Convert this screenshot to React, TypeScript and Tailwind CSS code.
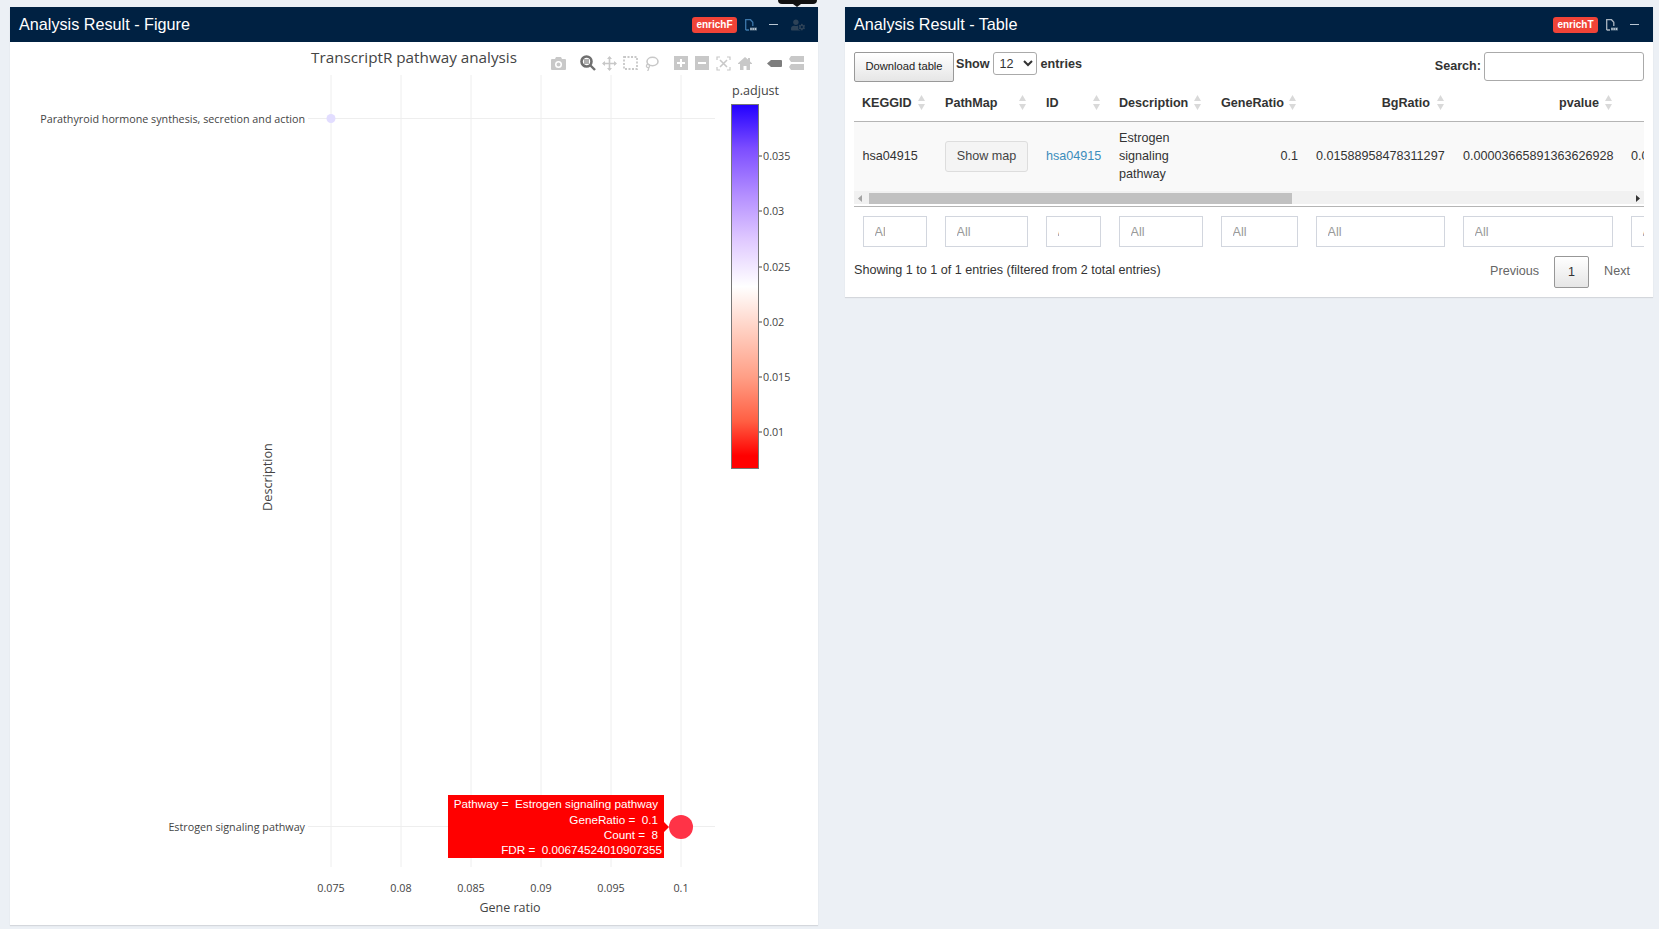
import { FaUserCog } from 'react-icons/fa';

const tickFont = { fontFamily: '"Open Sans", sans-serif' };

const xTicks = [
  { x: 331, label: '0.075' },
  { x: 401, label: '0.08' },
  { x: 471, label: '0.085' },
  { x: 541, label: '0.09' },
  { x: 611, label: '0.095' },
  { x: 681, label: '0.1' },
];

const colorTicks = [
  { y: 156, label: '0.035' },
  { y: 211, label: '0.03' },
  { y: 267, label: '0.025' },
  { y: 322, label: '0.02' },
  { y: 377, label: '0.015' },
  { y: 432, label: '0.01' },
];

function Chart() {
  return (
    <svg width="808" height="883" viewBox="10 42 808 883" className="block" style={tickFont}>
      <defs>
        <linearGradient id="padjust" x1="0" y1="1" x2="0" y2="0">
          <stop offset="0" stopColor="#ff0000" />
          <stop offset="0.035" stopColor="#ff0000" />
          <stop offset="0.13" stopColor="#ff5f43" />
          <stop offset="0.25" stopColor="#ff9e85" />
          <stop offset="0.38" stopColor="#ffd0c2" />
          <stop offset="0.5" stopColor="#ffffff" />
          <stop offset="0.63" stopColor="#dfc8ff" />
          <stop offset="0.75" stopColor="#b48fff" />
          <stop offset="0.88" stopColor="#7c4dff" />
          <stop offset="1" stopColor="#2200ff" />
        </linearGradient>
      </defs>

      <text x="414" y="63" textAnchor="middle" fontSize="15.25" fill="#444">
        TranscriptR pathway analysis
      </text>

      {xTicks.map(t => (
        <g key={t.label}>
          <line x1={t.x} x2={t.x} y1="75" y2="867" stroke="#eeeeee" />
          <text x={t.x} y="892" textAnchor="middle" fontSize="10.75" fill="#444">
            {t.label}
          </text>
        </g>
      ))}
      <line x1="308" x2="715" y1="118.5" y2="118.5" stroke="#eeeeee" />
      <line x1="308" x2="715" y1="826.5" y2="826.5" stroke="#eeeeee" />

      <text x="305" y="123" textAnchor="end" fontSize="10.75" fill="#444">
        Parathyroid hormone synthesis, secretion and action
      </text>
      <text x="305" y="831" textAnchor="end" fontSize="10.75" fill="#444">
        Estrogen signaling pathway
      </text>
      <text x="510" y="912" textAnchor="middle" fontSize="12.5" fill="#444">
        Gene ratio
      </text>
      <text transform="translate(272 477) rotate(-90)" textAnchor="middle" fontSize="12.7" fill="#444">
        Description
      </text>

      <circle cx="331" cy="118.5" r="4.5" fill="#e2ddff" />
      <circle cx="681" cy="827" r="12" fill="#ff3347" />

      <text x="732" y="95" fontSize="12.6" fill="#444">
        p.adjust
      </text>
      <rect x="731.5" y="104.5" width="27" height="364" fill="url(#padjust)" stroke="#777" />
      {colorTicks.map(t => (
        <g key={t.label}>
          <line x1="759" x2="762" y1={t.y} y2={t.y} stroke="#444" />
          <text x="763" y={t.y + 4} fontSize="10.75" fill="#444">
            {t.label}
          </text>
        </g>
      ))}

      <path d="M448 795H664V822L669 827L664 832V858H448Z" fill="#ff0000" />
      <g fontSize="11.7" fill="#ffffff" style={{ fontFamily: '"Liberation Sans", sans-serif' }}>
        <text x="658" y="808" textAnchor="end">
          {'Pathway = \u00a0Estrogen signaling pathway'}
        </text>
        <text x="658" y="824" textAnchor="end">
          {'GeneRatio = \u00a00.1'}
        </text>
        <text x="658" y="839" textAnchor="end">
          {'Count = \u00a08'}
        </text>
        <text x="662" y="854" textAnchor="end">
          {'FDR = \u00a00.00674524010907355'}
        </text>
      </g>
    </svg>
  );
}

function ModeBar() {
  const c = '#c8c8c8';
  return (
    <div className="absolute left-[541px] top-[13px] flex items-center">
      <svg width="15" height="13" viewBox="0 0 15 13">
        <path fillRule="evenodd" fill={c} d="M1 2H4L5 0H10L11 2H14Q15 2 15 3V12Q15 13 14 13H1Q0 13 0 12V3Q0 2 1 2ZM7.5 4A3.5 3.5 0 1 0 7.5 11A3.5 3.5 0 1 0 7.5 4ZM7.5 5.5A2 2 0 1 1 7.5 9.5A2 2 0 1 1 7.5 5.5Z" />
      </svg>
      <svg width="16" height="16" viewBox="0 0 16 16" className="ml-[14px]">
        <circle cx="6.5" cy="6.5" r="5" fill="none" stroke="#6f6f6f" strokeWidth="2.6" />
        <rect x="4" y="4" width="5" height="5" fill="#6f6f6f" opacity="0.55" />
        <path d="M10.5 10.5L15 15" stroke="#6f6f6f" strokeWidth="2.4" />
      </svg>
      <svg width="15" height="15" viewBox="0 0 15 15" className="ml-[6px]">
        <path d="M7.5 1V14M1 7.5H14" stroke={c} strokeWidth="1.6" />
        <path fill={c} d="M7.5 0L10 3H5ZM7.5 15L10 12H5ZM0 7.5L3 5V10ZM15 7.5L12 5V10Z" />
      </svg>
      <svg width="15" height="14" viewBox="0 0 15 14" className="ml-[6px]">
        <rect x="1" y="1" width="13" height="12" fill="none" stroke={c} strokeWidth="1.8" strokeDasharray="2 1.5" />
      </svg>
      <svg width="15" height="15" viewBox="0 0 15 15" className="ml-[6px]">
        <ellipse cx="8.5" cy="5.5" rx="5.5" ry="4.2" fill="none" stroke={c} strokeWidth="1.6" />
        <circle cx="4" cy="10" r="1.6" fill="none" stroke={c} strokeWidth="1.3" />
        <path d="M4.5 11.5Q5 13.5 3.5 15" fill="none" stroke={c} strokeWidth="1.3" />
      </svg>
      <svg width="14" height="14" viewBox="0 0 14 14" className="ml-[15px]">
        <path fill={c} fillRule="evenodd" d="M0 0H14V14H0ZM6 3V6H3V8H6V11H8V8H11V6H8V3Z" />
      </svg>
      <svg width="14" height="14" viewBox="0 0 14 14" className="ml-[7px]">
        <path fill={c} fillRule="evenodd" d="M0 0H14V14H0ZM3 6V8H11V6Z" />
      </svg>
      <svg width="15" height="15" viewBox="0 0 15 15" className="ml-[7px]">
        <path fill="none" stroke={c} strokeWidth="1.2" d="M1 4V1H4M11 1H14V4M14 11V14H11M4 14H1V11" />
        <path fill="none" stroke={c} strokeWidth="1.6" d="M4 4L11 11M11 4L4 11" />
      </svg>
      <svg width="14" height="13" viewBox="0 0 14 13" className="ml-[7px]">
        <path fill={c} d="M7 0L10 2.6V1H12V4.4L14 6.2V7H12V13H8.5V9H5.5V13H2V7H0V6.2Z" />
      </svg>
      <svg width="15" height="7" viewBox="0 0 15 7" className="ml-[15px]">
        <path fill="#7d7d7d" d="M0 3.5L4 0H14Q15 0 15 1V6Q15 7 14 7H4Z" />
      </svg>
      <svg width="15" height="14" viewBox="0 0 15 14" className="ml-[7px]">
        <path fill={c} d="M2 0H15V6H2L0 3ZM2 8H15V14H2L0 11Z" />
      </svg>
    </div>
  );
}

function PdfIcon({ stroke }: { stroke: string }) {
  return (
    <svg width="12" height="12" viewBox="0 0 12 12" className="ml-[8px]">
      <path fill="none" stroke={stroke} strokeWidth="1.3" d="M0.7 11V0.7H5.5L7.8 3.2V7M0.7 11H4" />
      <path fill="#9fb0c0" d="M5 8.5H12V11.5H5Z" opacity="0.6" />
      <path stroke="#e6edf3" strokeWidth="0.8" d="M6 9V11M8.2 9V11M10.4 9V11" />
    </svg>
  );
}

function BoxHeader({ title, badge, children }: { title: string; badge: string; children?: React.ReactNode }) {
  return (
    <div className="relative flex h-[35px] items-center bg-[#002142] pl-[9px] text-white">
      <h3 className="text-[16.2px] leading-none">{title}</h3>
      <div className="ml-auto flex items-center">
        <span className="flex h-[16px] w-[45px] items-center justify-center rounded-[3px] bg-[#f04337] text-[10px] font-bold">
          {badge}
        </span>
        {children}
      </div>
    </div>
  );
}

function SortArrows() {
  return (
    <svg width="7" height="15" viewBox="0 0 7 15" className="shrink-0">
      <path fill="#d9d9d9" d="M3.5 0L7 6H0ZM3.5 15L0 9H7Z" />
    </svg>
  );
}

const gridCols = 'grid grid-cols-[82px_101px_73px_102px_95px_147px_168px_100px]';

const headers = [
  { label: 'KEGGID', layout: 'justify-between pl-[8px] pr-[11px]' },
  { label: 'PathMap', layout: 'justify-between pl-[9px] pr-[11px]' },
  { label: 'ID', layout: 'justify-between pl-[9px] pr-[10px]' },
  { label: 'Description', layout: 'justify-between pl-[9px] pr-[11px]' },
  { label: 'GeneRatio', layout: 'justify-between pl-[9px] pr-[11px]' },
  { label: 'BgRatio', layout: 'justify-end gap-[7px] pl-[9px] pr-[10px]' },
  { label: 'pvalue', layout: 'justify-end gap-[6px] pl-[9px] pr-[10px]' },
];

function FilterInput({ className = '' }: { className?: string }) {
  return (
    <div className="px-[9px]">
      <input
        placeholder="All"
        className={`h-[31px] w-full border border-[#d2d6de] bg-white pl-[10.5px] text-[12.6px] placeholder:text-[#999] ${className}`}
      />
    </div>
  );
}

function TableBox() {
  return (
    <div className="px-[9px] pb-[9px] pt-[10px] text-[12.6px] text-[#333]">
      <div className="flex items-start">
        <button className="h-[30px] w-[100px] rounded-[2px] border border-[#999] bg-gradient-to-b from-white to-[#e6e6e6] pb-[2px] text-[11.2px] text-[#222]">
          Download table
        </button>
        <label className="ml-[2px] flex items-center font-bold">
          <span className="pt-[2px]">Show</span>
          <select
            defaultValue="12"
            className="ml-[3px] mr-[4px] h-[23px] w-[44px] rounded-[3px] border border-[#aaa] bg-white pl-[2px] font-normal"
          >
            <option>12</option>
          </select>
          <span className="pt-[2px]">entries</span>
        </label>
        <label className="ml-auto flex items-center font-bold">
          Search:
          <input className="ml-[3px] h-[29px] w-[160px] rounded-[3px] border border-[#aaa] bg-white" />
        </label>
      </div>

      <div className="overflow-hidden">
        <div className={`${gridCols} mt-[8px] h-[32px] items-center border-b border-[#b5b5b5] pb-[5px] font-bold text-[#333]`}>
          {headers.map(h => (
            <div key={h.label} className={`flex items-center ${h.layout}`}>
              <span>{h.label}</span>
              <SortArrows />
            </div>
          ))}
          <div />
        </div>

        <div className={`${gridCols} h-[69px] items-center bg-[#f9f9f9] pb-[2px] leading-[18px]`}>
          <div className="pl-[8.5px]">hsa04915</div>
          <div className="mt-[2px] px-[9px]">
            <button className="h-[31px] w-full rounded-[3px] border border-[#ddd] bg-[#f4f4f4] pb-[2px] text-[#444]">Show map</button>
          </div>
          <div className="pl-[9px] text-[#3c8dbc]">hsa04915</div>
          <div className="pl-[9px]">
            Estrogen
            <br />
            signaling
            <br />
            pathway
          </div>
          <div className="pr-[9px] text-right">0.1</div>
          <div className="pl-[9px]">0.01588958478311297</div>
          <div className="pl-[9px]">0.00003665891363626928</div>
          <div className="overflow-hidden whitespace-nowrap pl-[9px]">0.00674524010907355</div>
        </div>

        <div className="relative h-[13px] bg-[#f1f1f1]">
          <div className="absolute left-[15px] top-[2px] h-[11px] w-[423px] bg-[#c1c1c1]" />
          <svg width="5" height="7" viewBox="0 0 5 7" className="absolute left-[4px] top-[4px]">
            <path fill="#a3a3a3" d="M4 0V7L0 3.5Z" />
          </svg>
          <svg width="5" height="7" viewBox="0 0 5 7" className="absolute right-[4px] top-[4px]">
            <path fill="#333" d="M1 0V7L5 3.5Z" />
          </svg>
        </div>

        <div className={`${gridCols} mt-[2px] border-t border-[#b5b5b5] pt-[9px]`}>
          <FilterInput className="pr-[41.5px]" />
          <FilterInput />
          <FilterInput className="pr-[41.5px]" />
          <FilterInput />
          <FilterInput />
          <FilterInput />
          <FilterInput />
          <FilterInput />
        </div>
      </div>

      <div className="mt-[9px] flex items-start">
        <div className="pt-[5px]">Showing 1 to 1 of 1 entries (filtered from 2 total entries)</div>
        <div className="ml-auto flex items-center pr-[14px] text-[#666]">
          <span className="pb-[2px]">Previous</span>
          <span className="ml-[15px] flex h-[32px] w-[35px] items-center justify-center rounded-[2px] border border-[#979797] bg-gradient-to-b from-white to-[#e6e6e6] text-[#333]">
            1
          </span>
          <span className="ml-[15px] pb-[2px]">Next</span>
        </div>
      </div>
    </div>
  );
}

export default function App() {
  return (
    <div
      className="flex h-[929px] items-start gap-[27px] overflow-hidden bg-[#ecf0f5] pl-[10px] pt-[7px]"
      style={{ fontFamily: '"Liberation Sans", Arial, sans-serif' }}
    >
      <section className="relative w-[808px] bg-white shadow-[0_1px_1px_rgba(0,0,0,0.1)]">
        <BoxHeader title="Analysis Result - Figure" badge="enrichF">
          <PdfIcon stroke="#3d78ab" />
          <span className="ml-[12px] h-[1.5px] w-[9px] bg-[#b9c6d3]" />
          <FaUserCog className="ml-[13px] mr-[13px] text-[14px] text-[#2d4257]" />
        </BoxHeader>
        <div className="absolute left-[768px] top-[-7px] h-[4px] w-[39px] rounded-b-[4px] bg-[#111]" />
        <div className="absolute left-[783px] top-[-3px] h-0 w-0 border-x-[4px] border-t-[3px] border-x-transparent border-t-[#111]" />
        <div className="relative">
          <Chart />
          <ModeBar />
        </div>
      </section>

      <section className="w-[808px] bg-white shadow-[0_1px_1px_rgba(0,0,0,0.1)]">
        <BoxHeader title="Analysis Result - Table" badge="enrichT">
          <PdfIcon stroke="#aab5c0" />
          <span className="ml-[12px] mr-[14px] h-[1.5px] w-[9px] bg-[#b9c6d3]" />
        </BoxHeader>
        <TableBox />
      </section>
    </div>
  );
}
